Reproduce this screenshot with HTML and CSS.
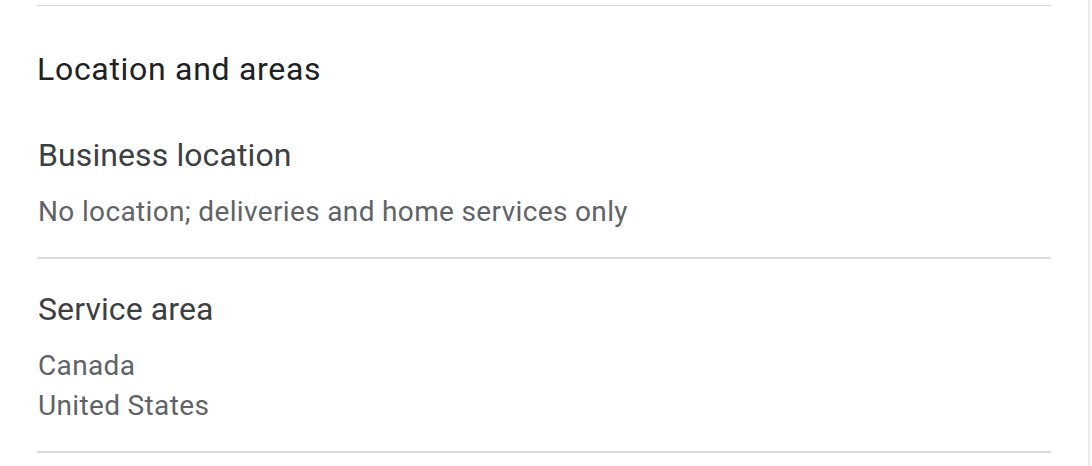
FILE: index.html
```html
<!DOCTYPE html>
<html lang="en">
<head>
    <meta charset="UTF-8">
    <meta name="viewport" content="width=device-width, initial-scale=1.0">
    <title>Location and areas</title>
    <link rel="stylesheet" href="styles.css">
</head>
<body>

    <div id="page">
        <!-- Location and areas section -->
        <div class="section">
            <h2 class="section-title">Location and areas</h2>

            <div class="info-row">
                <div class="info-label">Business location</div>
                <div class="info-value">No location; deliveries and home services only</div>
            </div>

            <div class="info-row">
                <div class="info-label">Service area</div>
                <div class="info-value">Canada</div>
                <div class="info-value">United States</div>
            </div>
        </div>
    </div>

</body>
</html>
```
FILE: styles.css
```css
body {
    margin: 0;
    background-color: #fff;
    font-family: Roboto, "Liberation Sans", Arial, sans-serif;
}

#page {
    width: 1090px;
    height: 466px;
    border-right: 2px solid #e8eaed;
    padding: 5px 0 0 37px;
    box-sizing: border-box;
}

.section {
    width: 1014px;
    border-top: 1px solid #dadce0;
}

.section-title {
    margin: 43px 0 16px 0;
    font-size: 32px;
    line-height: 40px;
    font-weight: 400;
    letter-spacing: 0.7px;
    color: #202124;
}

.info-row {
    padding: 30px 1px 25px 1px;
    border-bottom: 2px solid #dadce0;
}

.info-label {
    font-size: 32px;
    line-height: 40px;
    letter-spacing: 0.1px;
    color: #3c4043;
    margin-bottom: 17px;
}

.info-value {
    font-size: 28px;
    line-height: 40px;
    letter-spacing: 0.35px;
    color: #5f6368;
}
```
